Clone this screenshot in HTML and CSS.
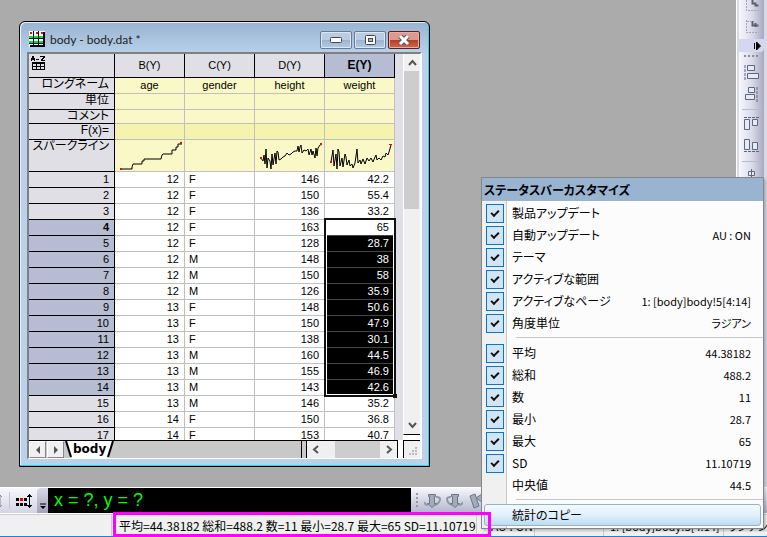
FILE: index.html
```
<!DOCTYPE html>
<html lang="ja">
<head>
  <meta charset="UTF-8">
  <meta name="viewport" content="width=device-width, initial-scale=1.0">
  <title>body - body.dat</title>
  <link rel="stylesheet" href="styles.css">
</head>
<body>

  <div class="workspace">
    <main class="desktop">
      <section class="window">
        <header class="title-bar">
          <svg class="book-icon" width="17" height="17" viewBox="0 0 17 17" shape-rendering="crispEdges">
            <rect width="16" height="16" fill="#fff"/>
            <path d="M0 5h15v2h-15zM0 10h15v2h-15z" fill="#0e0"/>
            <path d="M0 7h15v1h-15zM0 12h15v1h-15zM4 0h1v15h-1zM9 0h1v15h-1z" fill="#006"/>
            <path d="M1 1h2v2h-2zM7 1h2v2h-2zM12 1h2v2h-2z" fill="#f00"/>
            <path d="M14 1h2v15h-15v-2h13z" fill="#000"/>
          </svg>
          <h1 class="title">body - body.dat *</h1>
          <div class="caption-buttons">
            <button class="caption-btn" aria-label="最小化">
              <svg width="12" height="6" viewBox="0 0 12 6"><rect x=".5" y=".5" width="11" height="5" rx="1" fill="#fff" stroke="#445"/></svg>
            </button>
            <button class="caption-btn" aria-label="最大化">
              <svg width="12" height="10" viewBox="0 0 12 10"><rect x="1.500" y=".5" width="10" height="9" rx="1" fill="#fff" stroke="#445"/><rect x="4.500" y="3.500" width="4" height="3" fill="#9bd" stroke="#445"/></svg>
            </button>
            <button class="caption-btn close" aria-label="閉じる">
              <svg width="12" height="10" viewBox="0 0 12 10"><path d="M2 1l8 8M10 1l-8 8" stroke="#545470" stroke-width="5"/><path d="M2 1l8 8M10 1l-8 8" stroke="#fff" stroke-width="3"/></svg>
            </button>
          </div>
        </header>

        <div class="client">
          <div class="sheet">
            <table class="grid">
              <thead>
                <tr class="columns">
                  <th class="corner">
                    <svg width="15" height="14" viewBox="0 0 15 14" fill="none" stroke="#000" shape-rendering="crispEdges">
                      <path d="M.5 5v-3h1v-1.500h1v1.500h1v3M1 3.500h2M5 3.500h3M9 .5h4v1h-1v1h-1v1h-1v1h4"/>
                      <path d="M1.500 6.500h12v7h-12zM1 7.500h13M1 10.500h13M5.500 7v7M9.500 7v7"/>
                    </svg>
                  </th>
                  <th>B(Y)</th><th>C(Y)</th><th>D(Y)</th><th class="selected">E(Y)</th>
                </tr>
              </thead>
              <tbody class="labels">
                <tr><th>ロングネーム</th><td>age</td><td>gender</td><td>height</td><td>weight</td></tr>
                <tr><th>単位</th><td></td><td></td><td></td><td></td></tr>
                <tr class="comment"><th>コメント</th><td></td><td></td><td></td><td></td></tr>
                <tr class="formula"><th>F(x)=</th><td></td><td></td><td></td><td></td></tr>
                <tr class="sparklines">
                  <th>スパークライン</th>
                  <td><svg class="spark" viewBox="0 0 69 31">
                    <polyline points="6,29 17,29 17,27 18,24 27,24 27,21 29,21 29,19 46,19 47,15 48,14 57,14 57,10 61,10 61,7 63,7 63,4 67,4"/>
                    <path class="end" d="M5 28h2v2h-2zM65 2h2v2h-2z"/></svg></td>
                  <td></td>
                  <td><svg class="spark" viewBox="0 0 69 31">
                    <polyline points="6,18 8,21 9,15 10,24 11,9 12,28 13,18 15,21 16,29 17,14 18,25 20,13 21,24 22,11 23,12 24,20 26,19 28,17 30,16 32,13 34,15 36,14 38,12 40,11 42,11 43,6 44,12 45,7 46,5 47,13 49,10 51,11 53,9 54,15 56,9 57,15 58,11 60,18 61,8 62,16 63,8 65,5 67,4"/>
                    <path class="end" d="M5 17h2v2h-2zM65 3h2v2h-2z"/></svg></td>
                  <td><svg class="spark" viewBox="0 0 69 31">
                    <polyline points="6,22 8,10 9,26 11,14 12,29 13,9 14,12 15,26 17,18 18,27 20,14 21,17 22,25 24,20 25,26 27,24 28,28 30,23 31,16 32,9 33,23 35,20 36,24 38,19 40,24 42,18 44,21 46,18 48,22 50,17 51,15 52,20 54,18 56,20 58,16 60,17 61,13 63,15 64,12 66,5"/>
                    <path class="end" d="M5 21h2v2h-2zM64 4h3v1h-3z"/></svg></td>
                </tr>
              </tbody>
              <tbody class="data">
                <tr><th>1</th><td>12</td><td class="text">F</td><td>146</td><td>42.2</td></tr>
                <tr><th>2</th><td>12</td><td class="text">F</td><td>150</td><td>55.4</td></tr>
                <tr><th>3</th><td>12</td><td class="text">F</td><td>136</td><td>33.2</td></tr>
                <tr class="in-range current"><th>4</th><td>12</td><td class="text">F</td><td>163</td><td>65<div class="range-frame"></div></td></tr>
                <tr class="in-range"><th>5</th><td>12</td><td class="text">F</td><td>128</td><td>28.7</td></tr>
                <tr class="in-range"><th>6</th><td>12</td><td class="text">M</td><td>148</td><td>38</td></tr>
                <tr class="in-range"><th>7</th><td>12</td><td class="text">M</td><td>150</td><td>58</td></tr>
                <tr class="in-range"><th>8</th><td>12</td><td class="text">M</td><td>126</td><td>35.9</td></tr>
                <tr class="in-range"><th>9</th><td>13</td><td class="text">F</td><td>148</td><td>50.6</td></tr>
                <tr class="in-range"><th>10</th><td>13</td><td class="text">F</td><td>150</td><td>47.9</td></tr>
                <tr class="in-range"><th>11</th><td>13</td><td class="text">F</td><td>138</td><td>30.1</td></tr>
                <tr class="in-range"><th>12</th><td>13</td><td class="text">M</td><td>160</td><td>44.5</td></tr>
                <tr class="in-range"><th>13</th><td>13</td><td class="text">M</td><td>155</td><td>46.9</td></tr>
                <tr class="in-range"><th>14</th><td>13</td><td class="text">M</td><td>143</td><td>42.6</td></tr>
                <tr><th>15</th><td>13</td><td class="text">M</td><td>146</td><td>35.2</td></tr>
                <tr><th>16</th><td>14</td><td class="text">F</td><td>150</td><td>36.8</td></tr>
                <tr><th>17</th><td>14</td><td class="text">F</td><td>153</td><td>40.7</td></tr>
              </tbody>
            </table>
          </div>

          <div class="v-scroll">
            <button class="scroll-btn" aria-label="上へ"><svg width="9" height="7" viewBox="0 0 9 7"><path d="M1 6l3.500-4l3.500 4"/></svg></button>
            <div class="v-thumb"></div>
            <button class="scroll-btn" aria-label="下へ"><svg width="9" height="7" viewBox="0 0 9 7"><path d="M1 1l3.500 4l3.500-4"/></svg></button>
          </div>

          <div class="sheet-tabs">
            <button class="tab-nav" aria-label="前のシート"><svg width="4" height="8" viewBox="0 0 4 8"><path d="M4 0v8l-4-4z" fill="#555"/></svg></button>
            <button class="tab-nav" aria-label="次のシート"><svg width="4" height="8" viewBox="0 0 4 8"><path d="M0 0v8l4-4z" fill="#555"/></svg></button>
            <button class="tab">
              <svg width="7" height="16" viewBox="0 0 7 16"><path d="M0 0l6 16h1v-16z" fill="#fff"/><path d="M1 0l5 16" stroke="#000" stroke-width="2"/></svg>
              <span>body</span>
              <svg width="7" height="16" viewBox="0 0 7 16"><path d="M7 0l-6 16h-1v-16z" fill="#fff"/><path d="M6 0l-5 16" stroke="#000" stroke-width="2"/></svg>
            </button>
            <div class="tab-rest"></div>
            <div class="h-scroll">
              <button class="scroll-btn" aria-label="左へ"><svg width="7" height="9" viewBox="0 0 7 9"><path d="M6 1l-4 3.500l4 3.500"/></svg></button>
              <div class="h-thumb"></div>
              <button class="scroll-btn" aria-label="右へ"><svg width="7" height="9" viewBox="0 0 7 9"><path d="M1 1l4 3.500l-4 3.500"/></svg></button>
            </div>
          </div>

          <div class="grip">
            <svg width="9" height="9" viewBox="0 0 9 9" fill="#bbb"><path d="M6 0h2v2h-2zM3 3h2v2h-2zM6 3h2v2h-2zM0 6h2v2h-2zM3 6h2v2h-2zM6 6h2v2h-2z"/></svg>
          </div>
        </div>
      </section>
    </main>

    <aside class="side-tools">
      <div class="side-strip">
        <svg width="14" height="12" viewBox="0 0 14 12" class="faded"><path d="M1.500 0v10.500h12" stroke-dasharray="2 1"/><path d="M7.500 0v3.500h3v2h3" class="curve"/></svg>
        <svg width="14" height="14" viewBox="0 0 14 14" class="faded gap-8"><path d="M1.500 0v12.500h12M2 1.500h4" stroke-dasharray="2 1"/><path d="M7.500 1v4.500h6M10.500 3v4" class="curve"/></svg>
        <div class="side-more">
          <svg width="8" height="8" viewBox="0 0 8 8"><path d="M1.500 1v6"/><path d="M3.500 0v8l4-4z"/></svg>
        </div>
        <svg width="15" height="2" viewBox="0 0 15 2" class="side-grip" shape-rendering="crispEdges"><path d="M0 1h15" stroke-dasharray="2 2"/></svg>
        <svg width="15" height="15" viewBox="0 0 15 15"><path d="M1 0v15" stroke-dasharray="3 1"/><path class="box" d="M3.500 .5h7v5h-7zM3.500 8.500h11v5h-11z"/></svg>
        <svg width="15" height="15" viewBox="0 0 15 15" class="gap-7"><path d="M13 0v15" stroke-dasharray="3 1"/><path class="box" d="M4.500 .5h6v5h-6zM1.500 7.500h9v5h-9z"/></svg>
        <hr>
        <svg width="15" height="15" viewBox="0 0 15 15"><path d="M0 .5h15" stroke-dasharray="3 1"/><path class="box" d="M.5 2.500h5v10h-5zM8.500 2.500h5v6h-5z"/></svg>
        <svg width="15" height="15" viewBox="0 0 15 15" class="gap-7"><path d="M0 12.500h15" stroke-dasharray="3 1"/><path class="box" d="M.5 .5h5v10h-5zM8.500 3.500h5v7h-5z"/></svg>
        <hr>
        <svg width="15" height="15" viewBox="0 0 15 15"><path class="box" d="M4.500 2.500h6v4h-6zM1.500 8.500h11v5h-11z"/><path d="M7.500 0v15"/></svg>
      </div>
    </aside>
  </div>

  <div class="bottom-tools">
    <div class="tool-group">
      <svg width="3" height="18" viewBox="0 0 3 18"><path d="M0 3v12M0 3l2 2M0 15l2-2" stroke="#889" fill="none"/></svg>
      <span class="tool-sep"></span>
      <svg width="17" height="18" viewBox="0 0 17 18" shape-rendering="crispEdges">
        <path d="M0 6h3v3h-3zM8 6h3v3h-3zM0 11h3v3h-3zM4 11h3v3h-3zM8 11h3v3h-3z" fill="#000"/>
        <path d="M4 6h3v3h-3z" fill="#f00"/>
        <path d="M13.500 2v14M11 4.500h5M11 13.500h5M12 3.500h3M12 14.500h3" stroke="#000"/>
      </svg>
    </div>
    <div class="tool-more">
      <svg width="6" height="7" viewBox="0 0 6 7"><path d="M0 1h6" stroke="#000"/><path d="M0 3h6l-3 3z" fill="#000"/></svg>
    </div>
    <output class="coords">x = ?, y = ?</output>
    <div class="rotate-tools">
      <svg width="3" height="15" viewBox="0 0 3 15" fill="#999"><path d="M0 0h2v2h-2zM0 4h2v2h-2zM0 8h2v2h-2zM0 12h2v2h-2z"/></svg>
      <svg class="rotate" width="17" height="16" viewBox="0 0 17 16"><path d="M0 9q1 3 4 3M11 12q5-2 5-6q0-2-4-2"/><path class="block" d="M4.500 1.500h7v2h-1v7h2l-4.500 4l-4.500-4h2v-7h-1z"/></svg>
      <svg class="rotate" width="17" height="16" viewBox="0 0 17 16"><path d="M17 9q-1 3-4 3M6 12q-5-2-5-6q0-2 4-2"/><path class="block" d="M5.500 1.500h7v2h-1v7h2l-4.500 4l-4.500-4h2v-7h-1z"/></svg>
      <svg class="rotate" width="17" height="16" viewBox="0 0 17 16"><path class="block" d="M2 3l5-2l4 12l-5 2z"/><path class="block" d="M8 5l6-4v8z"/></svg>
    </div>
  </div>

  <footer class="status-bar">
    <div class="status-empty"></div>
    <div class="status-stats">平均=44.38182 総和=488.2 数=11 最小=28.7 最大=65 SD=11.10719</div>
    <div class="status-au">AU : ON</div>
    <div class="status-theme"></div>
    <div class="status-page">1: [body]body!5[4:14]</div>
    <div class="status-angle">ラジアン</div>
  </footer>

  <form class="status-menu">
    <h2 class="menu-title">ステータスバーカスタマイズ</h2>
    <div class="menu-group">
      <label class="menu-item"><input type="checkbox" checked><span>製品アップデート</span></label>
      <label class="menu-item"><input type="checkbox" checked><span>自動アップデート</span><span class="value">AU : ON</span></label>
      <label class="menu-item"><input type="checkbox" checked><span>テーマ</span></label>
      <label class="menu-item"><input type="checkbox" checked><span>アクティブな範囲</span></label>
      <label class="menu-item"><input type="checkbox" checked><span>アクティブなページ</span><span class="value">1: [body]body!5[4:14]</span></label>
      <label class="menu-item"><input type="checkbox" checked><span>角度単位</span><span class="value">ラジアン</span></label>
    </div>
    <div class="menu-group">
      <label class="menu-item"><input type="checkbox" checked><span>平均</span><span class="value">44.38182</span></label>
      <label class="menu-item"><input type="checkbox" checked><span>総和</span><span class="value">488.2</span></label>
      <label class="menu-item"><input type="checkbox" checked><span>数</span><span class="value">11</span></label>
      <label class="menu-item"><input type="checkbox" checked><span>最小</span><span class="value">28.7</span></label>
      <label class="menu-item"><input type="checkbox" checked><span>最大</span><span class="value">65</span></label>
      <label class="menu-item"><input type="checkbox" checked><span>SD</span><span class="value">11.10719</span></label>
      <label class="menu-item"><input type="checkbox"><span>中央値</span><span class="value">44.5</span></label>
    </div>
    <button type="button" class="copy-stats">統計のコピー</button>
  </form>

</body>
</html>
```
FILE: styles.css
```
*,
*::before,
*::after {
  box-sizing: border-box;
}

body {
  margin: 0;
  height: 100vh;
  display: flex;
  flex-direction: column;
  position: relative;
  overflow: hidden;
  background-color: #f0f0f0;
  color: #000;
  font-family: "Noto Sans CJK JP", sans-serif;
  font-size: 12px;
  font-feature-settings: "palt";
}

button {
  padding: 0;
  border: none;
  font: inherit;
  color: inherit;
}

svg {
  display: block;
  flex: none;
}

/* workspace */
.workspace {
  flex: 1;
  min-height: 0;
  display: flex;
}

.desktop {
  flex: 1;
  position: relative;
  overflow: hidden;
  background-color: #ababab;
}

.window {
  position: absolute;
  left: 19px;
  top: 21px;
  width: 411px;
  padding: 0 7px 7px;
  border: 1px solid #000;
  border-radius: 6px 6px 0 0;
  background: linear-gradient(#99b4d1, #b9d1ea 32px, #b9d1ea);
  box-shadow: inset -1px -1px #2ad0e8, inset 1px 1px #e8f0f8;
}

.title-bar {
  display: flex;
  align-items: center;
  height: 30px;
  padding: 5px 2px 0;
}

.title {
  flex: 1;
  margin: 0 0 0 4px;
  font-family: Lato, sans-serif;
  font-size: 12px;
  line-height: 18px;
  font-weight: normal;
  color: #222;
}

.caption-buttons {
  display: flex;
  gap: 2px;
}

.caption-btn {
  display: flex;
  align-items: center;
  justify-content: center;
  width: 32px;
  height: 18px;
  border: 1px solid #667a96;
  border-radius: 2px;
  box-shadow: inset 0 0 0 1px #dbe7f4;
  background: linear-gradient(#b9cce2 50%, #9ab3cf 50%, #b4cbe3);
}

.caption-btn.close {
  border-color: #5c2020;
  box-shadow: inset 0 0 0 1px #e5b0a5;
  background: linear-gradient(#dc9a8c 50%, #bb3a22 50%, #cd6a4c);
}

.client {
  display: grid;
  grid-template-columns: 1fr 17px;
  grid-template-rows: 386px 18px;
  border: 1px solid #fff;
  border-width: 2px 2px 1px;
  border-top-color: #808080;
  border-left-color: #808080;
  background-color: #fff;
}

/* worksheet */
.sheet {
  overflow: hidden;
  background-color: #e0dfe5;
}

.grid {
  width: 366px;
  table-layout: fixed;
  border-collapse: separate;
  border-spacing: 0;
  font-family: "Liberation Sans", "Noto Sans CJK JP", sans-serif;
  font-size: 11px;
  line-height: 15px;
}

.grid th,
.grid td {
  height: 16px;
  padding: 0 5px 0 0;
  border-right: 1px solid #c0c0c0;
  border-bottom: 1px solid #c0c0c0;
  overflow: hidden;
  vertical-align: top;
  text-align: right;
}

.grid th {
  border-color: #000;
  background-color: #e0dfe5;
  font-weight: normal;
}

.grid tr.columns th {
  height: 24px;
  padding: 0;
  vertical-align: middle;
  text-align: center;
}

.grid tr.columns th.corner {
  width: 86px;
  padding: 2px;
  vertical-align: top;
}

.grid tr.columns th.selected {
  background-color: #b6bcd2;
  font-size: 12px;
  font-weight: bold;
}

.grid .labels td {
  padding: 0;
  background-color: #faf8c6;
  text-align: center;
}

.labels th {
  font-size: 12px;
  line-height: 13px;
}

.grid .comment th,
.grid .comment td {
  height: 14px;
}

.grid .formula td {
  background-color: #f6f3ae;
}

.grid .sparklines th,
.grid .sparklines td {
  height: 32px;
}

.spark {
  width: 69px;
  height: 31px;
}

.spark polyline {
  fill: none;
  stroke: #000;
}

.spark .end {
  fill: #f00;
}

.data td {
  background-color: #fff;
}

.grid .text {
  padding-left: 4px;
  text-align: left;
}

.grid .in-range th {
  background-color: #b6bcd2;
}

.grid .current th {
  font-weight: bold;
}

.in-range td:last-child {
  border-bottom-color: #444;
  background-color: #000;
  color: #fff;
}

.in-range.current td:last-child {
  position: relative;
  overflow: visible;
  background-color: #fff;
  color: #000;
}

.range-frame {
  position: absolute;
  left: -1px;
  top: -2px;
  width: 72px;
  height: 179px;
  border: 2px solid #111;
  box-shadow: inset 0 0 0 1px #fff;
}

.range-frame::after {
  content: "";
  position: absolute;
  right: -3px;
  bottom: -3px;
  width: 4px;
  height: 4px;
  background-color: #111;
}

/* scroll bars */
.v-scroll {
  display: flex;
  flex-direction: column;
  margin-bottom: 5px;
  border-left: 1px solid #fff;
  border-bottom: 1px solid #000;
  background-color: #f0f0f0;
}

.scroll-btn {
  display: flex;
  align-items: center;
  justify-content: center;
  width: 16px;
  height: 17px;
  background-color: #f0f0f0;
}

.scroll-btn path {
  fill: none;
  stroke: #555;
  stroke-width: 2;
}

.v-scroll .scroll-btn:last-child {
  margin-top: auto;
}

.v-thumb {
  height: 138px;
  margin-right: 1px;
  background-color: #cdcdcd;
}

.h-scroll {
  display: flex;
  width: 92px;
  margin-left: 3px;
  border-left: 1px solid #000;
  border-right: 1px solid #000;
  background-color: #f0f0f0;
}

.h-scroll .scroll-btn:last-child {
  margin-left: auto;
}

.h-thumb {
  width: 45px;
  margin-left: 12px;
  background-color: #cdcdcd;
}

.sheet-tabs {
  display: flex;
  gap: 1px;
  margin-right: 5px;
  border-top: 1px solid #000;
  background-color: #c8c8c8;
}

.tab-nav {
  display: flex;
  align-items: center;
  justify-content: center;
  width: 17px;
  border: 1px solid #fff;
  border-right-color: #888;
  border-bottom-color: #888;
  background-color: #f0f0f0;
}

.tab {
  display: flex;
  background: none;
  font-family: "DejaVu Sans", sans-serif;
  font-size: 12px;
  line-height: 16px;
  font-weight: bold;
}

.tab span {
  padding: 0 1px;
  background-color: #fff;
}

.tab-rest {
  flex: 1;
  border-right: 1px solid #000;
}

.grip {
  display: flex;
  align-items: flex-end;
  justify-content: flex-end;
  padding: 2px;
  border-left: 1px solid #000;
  border-top: 1px solid #000;
  background-color: #f0f0f0;
}

/* right tool bar */
.side-tools {
  width: 31px;
  padding: 0 3px 0 2px;
  border-left: 1px solid #fff;
  background-color: #d9d9e6;
}

.side-strip {
  display: flex;
  flex-direction: column;
  align-items: center;
  height: 100%;
  overflow: hidden;
  background: linear-gradient(to right, #f6f8fd, #dcdce9 50%, #a9a8c2);
}

.side-strip path {
  fill: none;
  stroke: #5d6780;
}

.side-strip .box {
  fill: #e6eaf6;
}

.side-strip .faded path {
  stroke: #a0a6b6;
}

.side-strip .faded .curve {
  stroke: #5a6075;
  stroke-width: 2;
}

.side-strip .gap-7 {
  margin-top: 7px;
}

.side-strip .gap-8 {
  margin-top: 8px;
}

.side-more {
  align-self: stretch;
  display: flex;
  align-items: center;
  justify-content: flex-end;
  height: 13px;
  margin-top: 5px;
  padding-right: 3px;
  border-radius: 0 0 4px 0;
  background-color: #d5d7ee;
}

.side-strip .side-more path {
  fill: #000;
  stroke: #000;
}

.side-grip {
  margin: 3px 0 8px;
}

.side-strip .side-grip path {
  stroke: #8d8d98;
  stroke-width: 2;
}

.side-strip hr {
  width: 19px;
  margin: 7px 0;
  border: none;
  border-top: 1px solid #b8bbc9;
}

/* bottom tool bar */
.bottom-tools {
  display: flex;
  height: 27px;
  border-top: 1px solid #fff;
  border-bottom: 1px solid #fff;
  background: linear-gradient(#f6f8fd, #d4d4e4);
}

.tool-group {
  display: flex;
  align-items: center;
  gap: 6px;
  width: 37px;
}

.tool-sep {
  width: 1px;
  height: 17px;
  background-color: #c4c4d0;
}

.tool-more {
  display: flex;
  align-items: flex-end;
  justify-content: center;
  width: 11px;
  padding-bottom: 3px;
  border-radius: 4px 0 0 0;
  background: linear-gradient(#d8d8e6, #a2a2bc);
}

.coords {
  flex: 0 1 363px;
  padding-left: 6px;
  background-color: #000;
  color: #0f0;
  font-family: "Liberation Sans", sans-serif;
  font-size: 18px;
  line-height: 24px;
}

.rotate-tools {
  flex: 1;
  display: flex;
  align-items: center;
  gap: 5px;
  padding-left: 5px;
  background: linear-gradient(#f6f8fd, #b3b3ca);
}

.rotate path {
  fill: none;
  stroke: #8f98ab;
  stroke-width: 2;
}

.rotate .block {
  fill: #a3abba;
  stroke: #6d7689;
  stroke-width: 1;
}

/* status bar */
.status-bar {
  display: flex;
  height: 23px;
  border-top: 1px solid #d0d0d0;
  border-bottom: 1px solid #1883d7;
  line-height: 22px;
  white-space: nowrap;
}

.status-bar > div {
  flex: none;
  border-right: 1px solid #ccc;
}

.status-empty {
  width: 112px;
}

.status-stats {
  width: 365px;
  position: relative;
  padding-left: 7px;
}

/* highlight box, drawn above the menu */
.status-stats::after {
  content: "";
  position: absolute;
  z-index: 2;
  left: 1px;
  top: -3px;
  width: 378px;
  height: 25px;
  border: 3px solid #f0f;
}

.status-au {
  width: 58px;
  padding-left: 14px;
}

.status-theme {
  width: 69px;
}

.status-page {
  width: 120px;
  padding-left: 6px;
  font-size: 11px;
}

.status-angle {
  padding-left: 4px;
  font-size: 11px;
}

/* status bar menu */
.status-menu {
  position: absolute;
  z-index: 1;
  right: 3px;
  bottom: 8px;
  width: 283px;
  border: 1px solid #868686;
  background: linear-gradient(to right, #f0f0f0 24px, #c8c8c8 24px, #c8c8c8 25px, #fcfcfc 25px);
  box-shadow: 2px 2px 2px rgba(0, 0, 0, 0.2);
}

.menu-title {
  margin: 0;
  padding-left: 2px;
  background-color: #99b4d1;
  font-size: 12px;
  line-height: 23px;
  font-weight: bold;
}

.menu-group {
  padding-top: 1px;
}

.menu-group + .menu-group {
  padding-top: 0;
}

.menu-group::after {
  content: "";
  display: block;
  margin: 3px 0 4px 34px;
  border-top: 1px solid #c8c8c8;
}

.menu-item {
  display: flex;
  align-items: center;
  height: 22px;
  padding: 0 12px 0 4px;
  line-height: 18px;
}

.menu-item input {
  appearance: none;
  display: flex;
  align-items: center;
  justify-content: center;
  width: 18px;
  height: 19px;
  margin: 0 8px 0 0;
}

.menu-item input:checked {
  border: 1px solid #0078d7;
  background-color: #d3e5f5;
}

.menu-item input:checked::before {
  content: "";
  width: 8px;
  height: 5px;
  margin-bottom: 2px;
  border-left: 2px solid #111;
  border-bottom: 2px solid #111;
  transform: rotate(-45deg);
}

.value {
  margin-left: auto;
  font-size: 11px;
}

.copy-stats {
  display: block;
  width: calc(100% - 4px);
  height: 22px;
  margin: 0 2px 2px;
  padding-left: 27px;
  border: 1px solid #8fb4d0;
  border-radius: 3px;
  background: linear-gradient(#f4f9fd, #e2f0fa 50%, #bcdcf2);
  line-height: 20px;
  text-align: left;
}
```
